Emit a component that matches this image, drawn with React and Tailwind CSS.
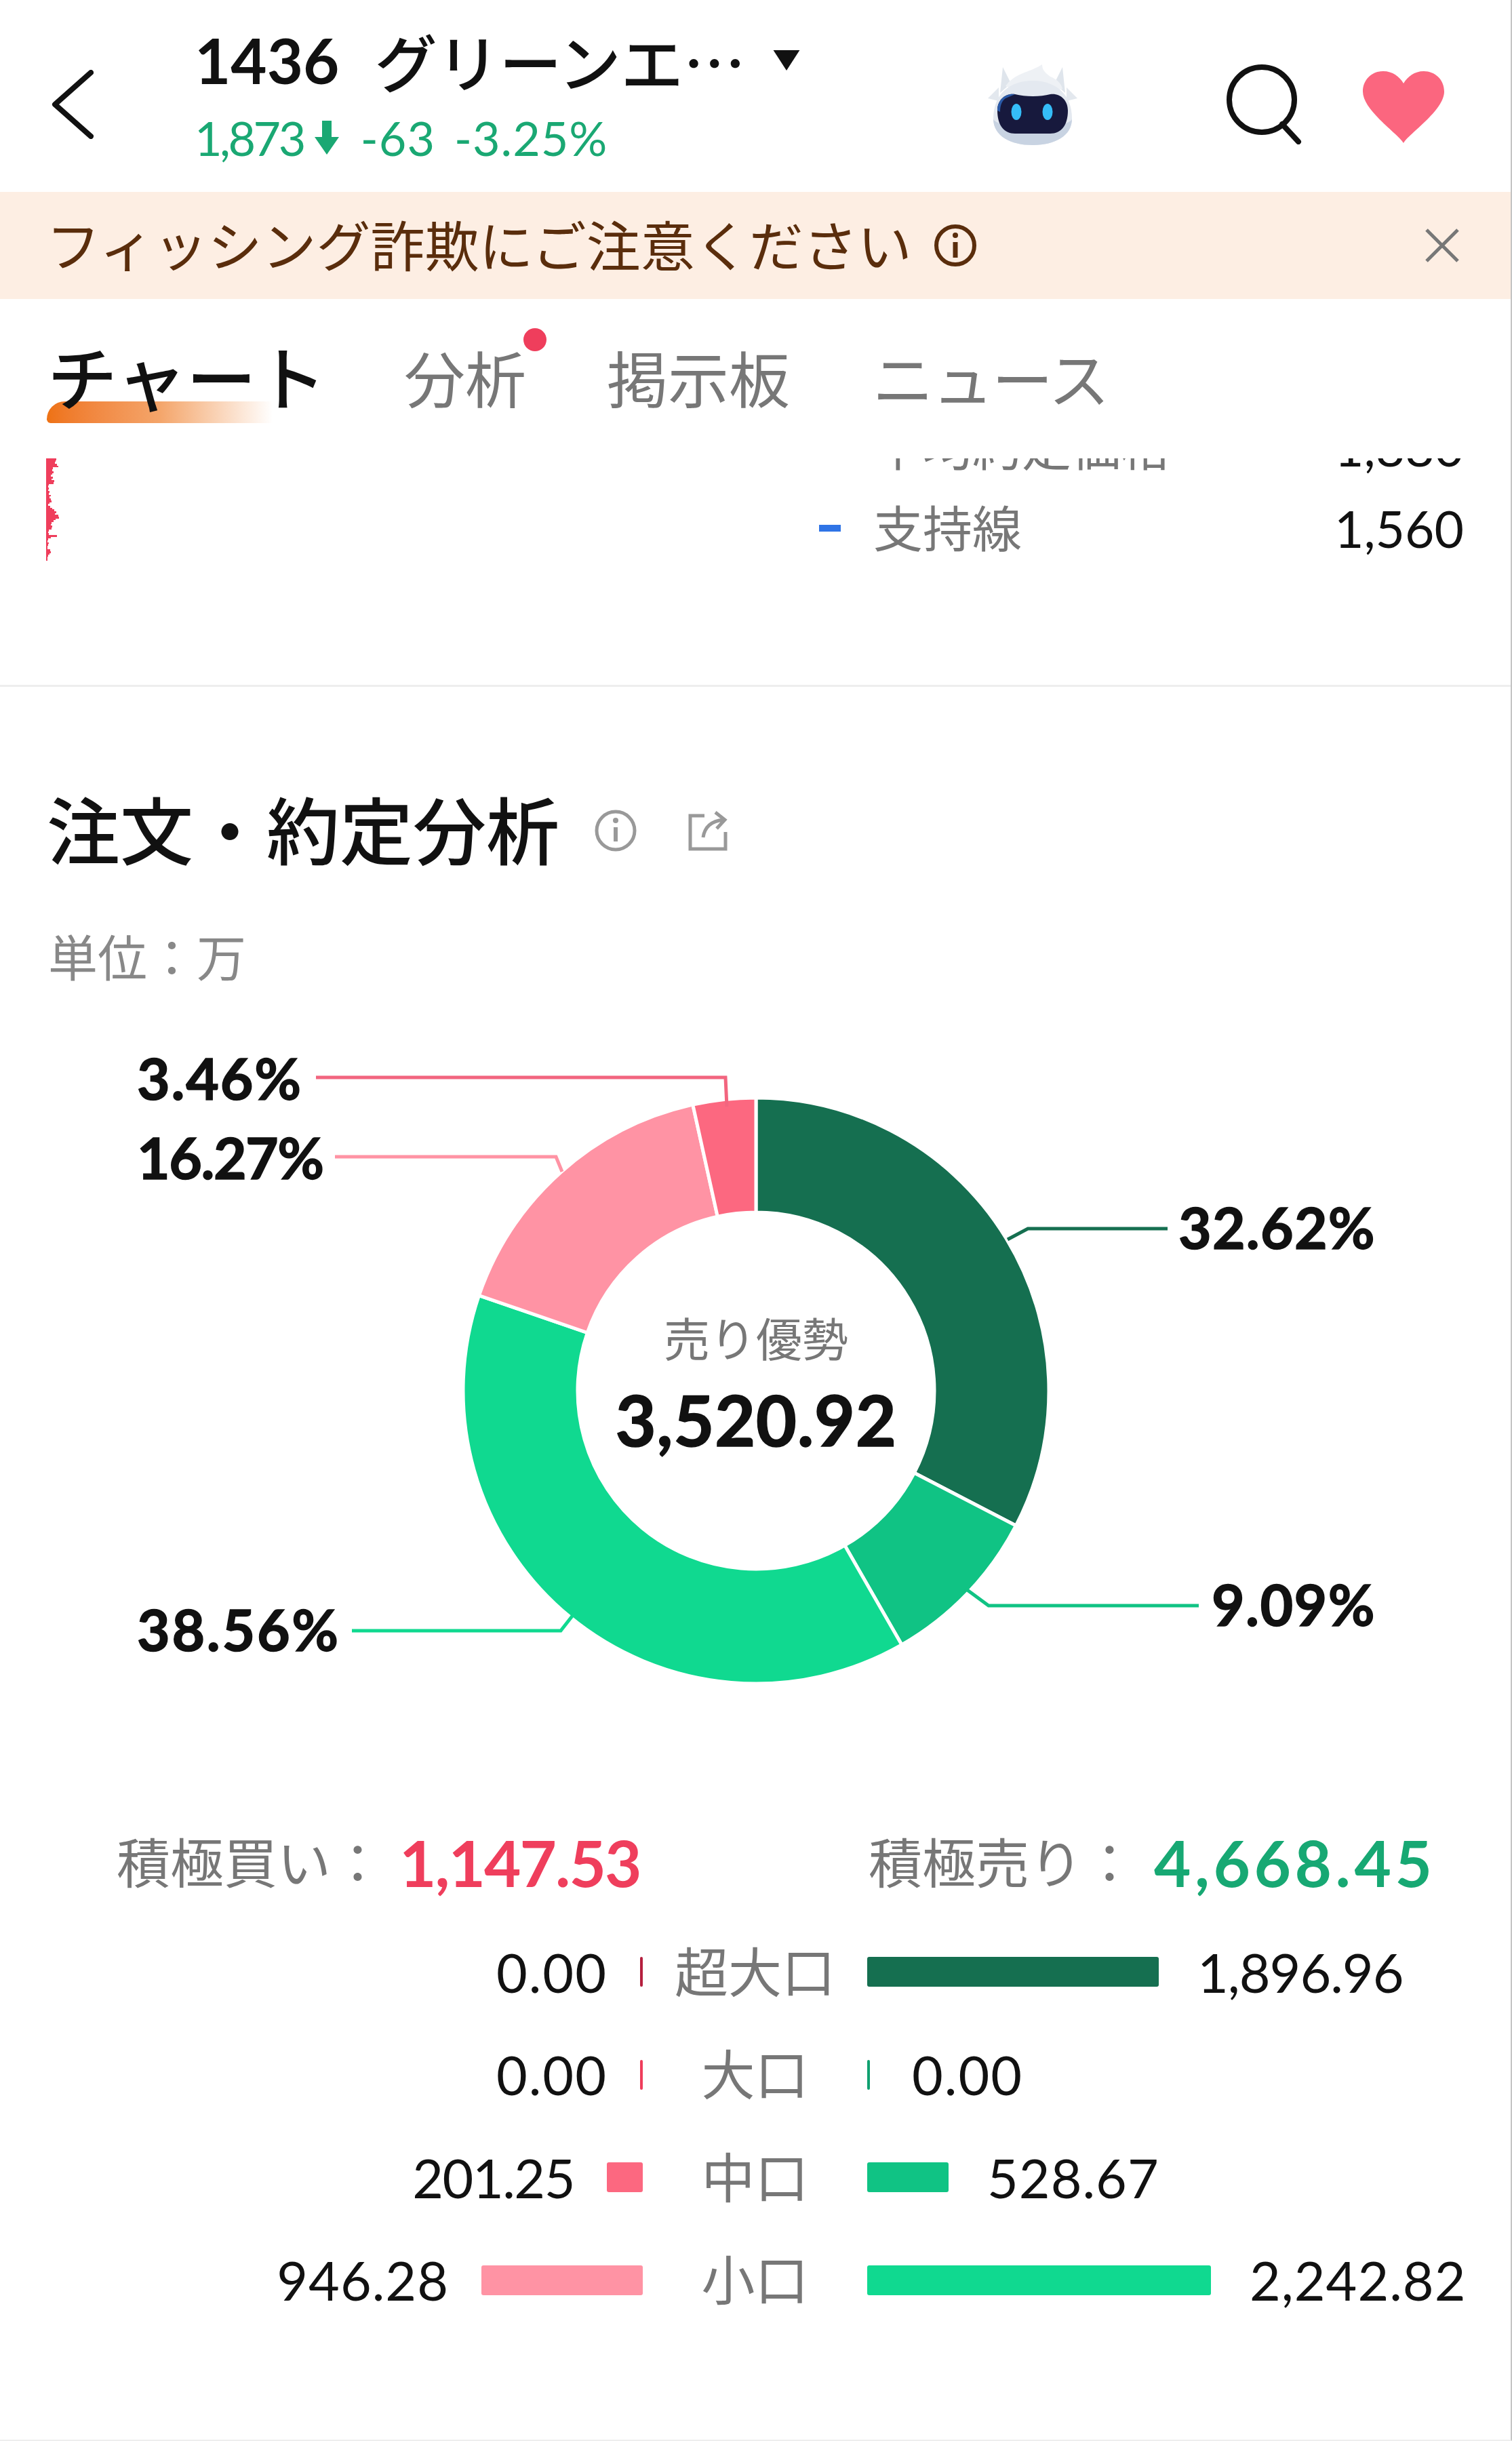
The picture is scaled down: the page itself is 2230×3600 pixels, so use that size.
const sans = "font-['Lato','Noto_Sans_CJK_JP',sans-serif]"

const slices = [
  { pct: 32.62, color: '#156f50' },
  { pct: 9.09, color: '#10c384' },
  { pct: 38.56, color: '#10d990' },
  { pct: 16.27, color: '#ff93a4' },
  { pct: 3.46, color: '#fc6880' },
]

const labels = [
  { text: '3.46%', x: 202, y: 1589, gap: 1.8, line: '466,1589 1070,1589 1072,1632', color: '#f2657f' },
  { text: '16.27%', x: 202, y: 1706, gap: -1.5, line: '494,1706 820,1706 829,1728', color: '#ff93a4' },
  { text: '32.62%', x: 1738, y: 1809, gap: 1.2, line: '1722,1812 1516,1812 1486,1828', color: '#156f50' },
  { text: '9.09%', x: 1787, y: 2365, gap: 1.4, line: '1768,2368 1458,2368 1424,2343', color: '#10c384' },
  { text: '38.56%', x: 202, y: 2402, gap: 2.7, line: '519,2405 827,2405 845,2382', color: '#10d990' },
]

const rows = [
  { name: '超大口', left: '0.00', leftCls: 'tracking-[2px]', leftW: 4, leftColor: '#b5203f', right: '1,896.96', rightCls: 'ml-[57px] tracking-[-1px]', rightW: 430, rightColor: '#156f50' },
  { name: '大口', left: '0.00', leftCls: 'tracking-[2px]', leftW: 4, leftColor: '#ef3e5c', right: '0.00', rightCls: 'ml-[62px] tracking-[2px]', rightW: 4, rightColor: '#10a070' },
  { name: '中口', left: '201.25', leftCls: 'tracking-[-1.5px]', leftW: 53, leftColor: '#fc6880', right: '528.67', rightCls: 'ml-[57px] tracking-[1px]', rightW: 120, rightColor: '#10c384' },
  { name: '小口', left: '946.28', leftCls: 'tracking-[1px]', leftW: 238, leftColor: '#ff93a4', right: '2,242.82', rightCls: 'ml-[57px] tracking-[1px]', rightW: 507, rightColor: '#10d990' },
]

// widths of the depth bars peeking out at the chart's left edge, 3px a row
const depth = [
  15, 14, 13, 16, 18, 10, 9, 11, 9, 7, 10, 8, 12, 11, 4, 3, 4, 3, 5, 4, 7, 5, 7, 8, 5, 3, 6, 9, 12, 15,
  13, 18, 19, 14, 11, 8, 7, 9, 8, 4, 3, 4, 16, 7, 3, 2, 4, 3, 2, 2, 6, 7, 5, 3, 2, 2,
]

function arcPath(cx, cy, r, R, a0, a1) {
  const pt = (rad, a) => `${cx + rad * Math.sin(a)} ${cy - rad * Math.cos(a)}`
  const big = a1 - a0 > Math.PI ? 1 : 0
  return `M${pt(R, a0)} A${R} ${R} 0 ${big} 1 ${pt(R, a1)} L${pt(r, a1)} A${r} ${r} 0 ${big} 0 ${pt(r, a0)} Z`
}

function Donut() {
  let start = 0
  return (
    <svg viewBox="0 1500 2230 1100" className="block h-[1100px] w-[2230px]">
      {slices.map((s) => {
        const a0 = start
        const a1 = start + (s.pct / 100) * Math.PI * 2
        start = a1
        return <path key={s.pct} d={arcPath(1115, 2051, 263, 432, a0, a1)} fill={s.color} stroke="#fff" strokeWidth="5" />
      })}
      {labels.map((l) => (
        <g key={l.text}>
          <polyline points={l.line} fill="none" stroke={l.color} strokeWidth="5" />
          <text
            x={l.x}
            y={l.y}
            dominantBaseline="central"
            fontFamily="Lato, sans-serif"
            fontWeight="700"
            fontSize="84"
            letterSpacing={l.gap}
            fill="#111"
            stroke="#111"
            strokeWidth="1.5"
          >
            {l.text}
          </text>
        </g>
      ))}
      <text x="1115" y="1971" textAnchor="middle" dominantBaseline="central" fontFamily="'Noto Sans CJK JP', sans-serif" fontSize="68" fill="#777">
        売り優勢
      </text>
      <text x="1115" y="2092" textAnchor="middle" dominantBaseline="central" fontFamily="Lato, sans-serif" fontWeight="700" fontSize="104" letterSpacing="0.5" fill="#111" stroke="#111" strokeWidth="1.5">
        3,520.92
      </text>
    </svg>
  )
}

function Robot() {
  return (
    <svg viewBox="0 0 140 120" className="h-[120px] w-[140px]">
      <path d="M22 42 L26 4 L38 28 Z" fill="#dfe5ec" />
      <path d="M118 42 L114 4 L102 28 Z" fill="#dfe5ec" />
      <path d="M30 32 C44 12 66 12 84 0 C84 8 88 12 96 18 C106 22 112 28 114 36 L70 50 Z" fill="#eef1f5" />
      <path d="M4 50 L20 34 L20 54 Z" fill="#e3e8ee" />
      <path d="M136 50 L120 34 L120 54 Z" fill="#e3e8ee" />
      <path d="M70 24 C104 24 128 44 128 80 C128 106 102 119 70 119 C38 119 12 106 12 80 C12 44 36 24 70 24 Z" fill="#e4e9f0" />
      <path d="M70 96 C100 96 128 86 128 80 C128 106 102 119 70 119 C38 119 12 106 12 80 C12 86 40 96 70 96 Z" fill="#c8d3e2" />
      <path d="M18 68 C18 52 30 42 44 44 C60 48 80 48 96 44 C110 42 122 52 122 68 C122 90 112 102 96 102 L44 102 C28 102 18 90 18 68 Z" fill="#17193d" />
      <path d="M18 68 C18 52 30 42 44 44 L30 50 C24 54 22 62 22 70 Z" fill="#2a5aa8" />
      <ellipse cx="46" cy="70" rx="7.5" ry="12" fill="#35bdf8" />
      <ellipse cx="92" cy="70" rx="7.5" ry="12" fill="#35bdf8" />
    </svg>
  )
}

function Header() {
  return (
    <div className="relative flex h-[283px] items-center bg-white">
      <svg viewBox="0 0 62 102" className="ml-[76px] mt-[24px] h-[102px] w-[62px] shrink-0" fill="none" stroke="#111" strokeWidth="8" strokeLinecap="round" strokeLinejoin="round">
        <path d="M58 4 L5 51 L58 98" />
      </svg>
      <div className="mb-[6px] ml-[149px] w-[1100px] shrink-0">
        <div className="flex h-[92px] items-center text-[92px] leading-none font-bold text-[#111]">
          <span>1436</span>
          <span className="ml-[52px] font-['Noto_Sans_CJK_JP',sans-serif] font-medium">グリーンエ…</span>
          <svg viewBox="0 0 44 34" className="ml-[38px] h-[30px] w-[44px]">
            <path d="M0 0 H44 L22 34 Z" fill="#111" />
          </svg>
        </div>
        <div className="mt-[37px] flex h-[62px] items-center text-[70px] leading-none text-[#1aa873]">
          <span className="tracking-[-3.5px]">1,873</span>
          <svg viewBox="0 0 36 50" className="ml-[16px] h-[50px] w-[36px]">
            <path d="M11 0 H25 V24 H36 L18 50 L0 24 H11 Z" fill="#1aa873" />
          </svg>
          <span className="ml-[32px] tracking-[1px]">-63</span>
          <span className="ml-[28px] tracking-[1px]">-3.25%</span>
        </div>
      </div>
      <div className="ml-[66px] mt-[26px]">
        <Robot />
      </div>
      <svg viewBox="0 0 112 118" className="ml-[216px] mt-[24px] h-[118px] w-[112px] shrink-0" fill="none" stroke="#111" strokeWidth="8" strokeLinecap="round">
        <circle cx="52" cy="52" r="48" />
        <path d="M82 88 L106 114" />
      </svg>
      <svg viewBox="0 0 120 106" className="ml-[89px] mt-[32px] h-[106px] w-[120px] shrink-0">
        <path d="M60 106 C52 92 0 58 0 30 C0 12 14 0 30 0 C44 0 54 8 60 18 C66 8 76 0 90 0 C106 0 120 12 120 30 C120 58 68 92 60 106 Z" fill="#fb667f" />
      </svg>
    </div>
  )
}

function Banner() {
  return (
    <div className="flex h-[158px] items-center bg-[#fdeee3] pl-[68px] pr-[76px] text-[80px] leading-none text-[#5a2d0c]">
      <span>フィッシング詐欺にご注意ください</span>
      <svg viewBox="0 0 64 64" className="ml-[32px] h-[64px] w-[64px]" fill="none" stroke="#5a2d0c" strokeWidth="6">
        <circle cx="32" cy="32" r="28" />
        <path d="M32 27 V50" strokeWidth="7" />
        <circle cx="32" cy="17" r="4" fill="#5a2d0c" stroke="none" />
      </svg>
      <svg viewBox="0 0 50 50" className="ml-auto h-[50px] w-[50px]" fill="none" stroke="#777" strokeWidth="5">
        <path d="M2 2 L48 48 M48 2 L2 48" />
      </svg>
    </div>
  )
}

function Tabs() {
  return (
    <div className="flex h-[235px] items-center pl-[70px] text-[90px] leading-none text-[#777]">
      <div className="relative">
        <div className="absolute left-[-1px] top-[85px] h-[32px] w-[333px] rounded-tl-[28px] rounded-bl-[6px] bg-gradient-to-r from-[#ee7213] via-[#f4a56a] to-transparent" />
        <span className="relative text-[103px] font-medium text-[#111]">チャート</span>
      </div>
      <div className="relative ml-[115px]">
        分析
        <div className="absolute right-[-30px] top-[-30px] h-[34px] w-[34px] rounded-full bg-[#ef3e5c]" />
      </div>
      <div className="ml-[119px]">掲示板</div>
      <div className="ml-[122px] tracking-[-2px]">ニュース</div>
    </div>
  )
}

function ChartStub() {
  return (
    <div className="flex h-[337px] overflow-hidden border-b-[3px] border-[#eeeeee]">
      <div className="ml-[68px] w-[20px] shrink-0">
        {depth.map((w, i) => (
          <div key={i} className="h-[2.7px] bg-[#ef3e5c]" style={{ width: w }} />
        ))}
      </div>
      <div className="ml-[1120px] mt-[-77px] w-[951px] shrink-0 text-[73px] leading-none">
        <div className="flex h-[120px] items-center pl-[80px]">
          <span className="text-[#777]">平均約定価格</span>
          <span className="ml-auto text-[75px] text-[#111]">1,880</span>
        </div>
        <div className="relative flex h-[120px] items-center pl-[80px]">
          <div className="absolute left-0 h-[10px] w-[32px] bg-[#2f74e6]" />
          <span className="text-[#777]">支持線</span>
          <span className="ml-auto text-[75px] text-[#111]">1,560</span>
        </div>
      </div>
    </div>
  )
}

function Stats() {
  return (
    <div className="mt-[97px]">
      <div className="flex h-[100px] items-center text-[79px] leading-none">
        <div className="ml-[172px] flex w-[1109px] shrink-0 items-center">
          <span className="text-[#777]">積極買い：</span>
          <span className="ml-[22px] text-[94px] font-bold tracking-[-2px] text-[#ef3e5c]">1,147.53</span>
        </div>
        <span className="text-[#777]">積極売り：</span>
        <span className="ml-[26px] text-[94px] font-bold tracking-[5.5px] text-[#17a873]">4,668.45</span>
      </div>
      <div className="mt-[61px] grid grid-cols-[948px_331px_1fr] text-[79px] leading-none">
        {rows.map((r) => (
          <div key={r.name} className="col-span-3 grid h-[151.5px] grid-cols-subgrid items-start">
            <div className="flex h-[100px] items-center justify-end">
              <span className={`text-[#111] ${r.leftCls}`}>{r.left}</span>
              <div className="ml-[48px] h-[44px] rounded-[3px]" style={{ width: r.leftW, backgroundColor: r.leftColor }} />
            </div>
            <div className="flex h-[100px] items-center justify-center text-[#777]">{r.name}</div>
            <div className="flex h-[100px] items-center">
              <div className="h-[44px] rounded-[3px]" style={{ width: r.rightW, backgroundColor: r.rightColor }} />
              <span className={`text-[#111] ${r.rightCls}`}>{r.right}</span>
            </div>
          </div>
        ))}
      </div>
    </div>
  )
}

export default function App() {
  return (
    <div className={`h-[3600px] w-[2230px] overflow-hidden border-r-[2px] border-b-[2px] border-r-[#c4c4c4] border-b-[#eeeeee] bg-white ${sans}`}>
      <Header />
      <Banner />
      <Tabs />
      <ChartStub />
      <div className="mt-[155px] flex h-[114px] items-center pl-[69px]">
        <span className="text-[108px] leading-none font-medium text-[#111]">注文・約定分析</span>
        <svg viewBox="0 0 64 64" className="ml-[51px] h-[64px] w-[64px]" fill="none" stroke="#999" strokeWidth="5">
          <circle cx="32" cy="32" r="28" />
          <path d="M32 27 V48" strokeWidth="6" />
          <circle cx="32" cy="17" r="4" fill="#999" stroke="none" />
        </svg>
        <svg viewBox="0 0 60 60" className="ml-[75px] h-[60px] w-[60px]" fill="none" stroke="#999" strokeWidth="5">
          <path d="M24 8 H3 V57 H55 V32" />
          <path d="M22 40 C24 26 32 16 52 14 M40 3 L54 14 L42 27" />
        </svg>
      </div>
      <div className="mt-[80px] pl-[71px] text-[73px] leading-[100px] text-[#888]">単位：万</div>
      <div className="mt-[38px]">
        <Donut />
      </div>
      <Stats />
    </div>
  )
}
